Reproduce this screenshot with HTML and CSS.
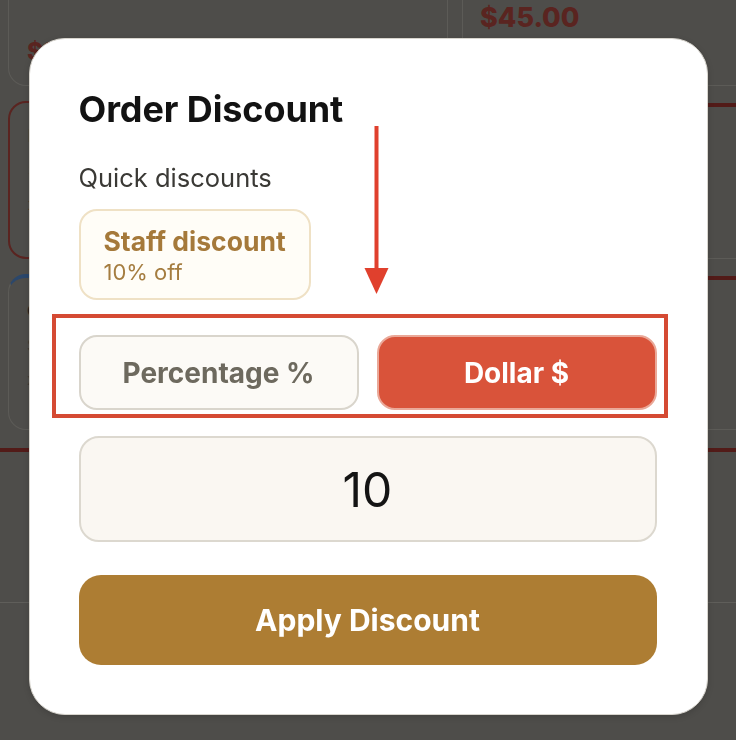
FILE: index.html
```html
<!DOCTYPE html>
<html lang="en">
<head>
<meta charset="utf-8">
<title>Order Discount</title>
<link rel="stylesheet" href="styles.css">
</head>
<body>
<div class="app">
  <div class="grid">
    <div class="card card-top-left">
      <div class="price">$12</div>
    </div>
    <div class="card card-top-right">
      <div class="price">$45.00</div>
    </div>
    <div class="card card-selected">
      <div class="item-name">Pizza</div>
      <div class="item-meta">Size</div>
      <div class="item-price">x1</div>
    </div>
    <div class="card card-red"></div>
    <div class="card card-blue">
      <div class="item-name">Cola</div>
      <div class="item-meta">Side</div>
      <div class="item-meta">x2</div>
    </div>
    <div class="card card-red"></div>
  </div>
  <div class="bar"></div>
  <div class="footer"></div>
</div>

<div class="overlay">
  <div class="modal">
    <h1 class="title">Order Discount</h1>
    <div class="label">Quick discounts</div>
    <button class="quick">
      <span class="quick-name">Staff discount</span>
      <span class="quick-sub">10% off</span>
    </button>
    <div class="toggle">
      <button class="toggle-btn">Percentage %</button>
      <button class="toggle-btn active">Dollar $</button>
    </div>
    <div class="amount">10</div>
    <button class="apply">Apply Discount</button>

    <div class="callout-box"></div>
    <svg class="callout-arrow" width="26" height="168" viewBox="0 0 26 168">
      <line x1="12.5" y1="0" x2="12.5" y2="146" stroke="#e0402d" stroke-width="4"/>
      <polygon points="0.5,142 24.5,142 12.5,168" fill="#e0402d"/>
    </svg>
  </div>
</div>
</body>
</html>
```
FILE: styles.css
```css
* { box-sizing: border-box; }
html, body {
  margin: 0;
  padding: 0;
}
body {
  width: 736px;
  height: 740px;
  overflow: hidden;
  background: #4e4d4a;
  font-family: Inter, "Noto Sans", sans-serif;
}

/* dimmed app behind */
.app {
  padding-left: 8px;
}
.grid {
  display: grid;
  grid-template-columns: 440px 1fr;
  grid-template-rows: 86px 158px 156px;
  column-gap: 14px;
  row-gap: 15px;
}
.card {
  border: 1.5px solid #5c5b57;
  border-radius: 18px;
  padding: 16px 16px;
}
.card-top-left {
  border-top: none;
  border-radius: 0 0 18px 18px;
  padding: 34px 0 0 18px;
}
.card-top-right {
  border-top: none;
  border-right: none;
  border-radius: 0 0 0 18px;
  padding: 0 0 0 17px;
}
.price {
  font-weight: 800;
  font-size: 27px;
  line-height: 36px;
  color: #5a2420;
}
.card-top-left .price { font-size: 24px; }
.card-selected {
  border: 2px solid #5a2420;
}
.card-red {
  border-top: 4px solid #521b18;
  border-right: none;
  border-radius: 0;
  margin-top: 2px;
}
.card-blue {
  border-top: 4px solid #2b476b;
}
.item-name {
  font-weight: 700;
  font-size: 18px;
  line-height: 34px;
  color: #1e1d1c;
  padding-left: 2px;
}
.item-meta {
  font-size: 16px;
  line-height: 34px;
  color: #3a3936;
  padding-left: 2px;
}
.item-price {
  font-weight: 700;
  font-size: 16px;
  line-height: 34px;
  color: #5a2420;
  padding-left: 2px;
}
.bar {
  margin-top: 18px;
  height: 154px;
  border-top: 4px solid #521b18;
  margin-left: -8px;
}
.footer {
  margin-left: -8px;
  height: 140px;
  border-top: 1px solid #5f5e5a;
}

/* modal */
.overlay {
  position: fixed;
  inset: 0;
  display: flex;
  justify-content: center;
  align-items: flex-start;
  padding-top: 38px;
}
.modal {
  position: relative;
  width: 679px;
  height: 677px;
  background: #ffffff;
  border: 1px solid #d8d5ce;
  border-radius: 36px;
  padding: 48px 50px 49px 49px;
  display: flex;
  flex-direction: column;
  box-shadow: 0 2px 6px rgba(0,0,0,0.15);
}
.title {
  margin: 0;
  font-size: 36px;
  line-height: 44px;
  font-weight: 700;
  color: #121212;
  letter-spacing: -0.1px;
}
.label {
  margin-top: 31px;
  font-size: 25.5px;
  line-height: 32px;
  color: #3a3935;
}
button {
  font-family: inherit;
  cursor: pointer;
}
.quick {
  margin-top: 15px;
  align-self: flex-start;
  display: flex;
  flex-direction: column;
  align-items: flex-start;
  padding: 15px 23px 13px;
  background: #fffdf7;
  border: 2px solid #efe1c5;
  border-radius: 18px;
  text-align: left;
}
.quick-name {
  font-weight: 700;
  font-size: 26.5px;
  line-height: 31px;
  color: #a5793a;
}
.quick-sub {
  margin-top: 2px;
  font-size: 22px;
  line-height: 26px;
  color: #a57d40;
}
.toggle {
  margin-top: 35px;
  display: grid;
  grid-template-columns: 1fr 1fr;
  column-gap: 18px;
}
.toggle-btn {
  height: 75px;
  border-radius: 18px;
  border: 2px solid #d9d5cc;
  background: #fcfaf6;
  color: #6d695e;
  font-weight: 700;
  font-size: 28px;
}
.toggle-btn.active {
  background: #d9533a;
  border-color: #eaa898;
  color: #ffffff;
}
.amount {
  margin-top: 26px;
  height: 106px;
  border-radius: 20px;
  border: 2px solid #dcd8cf;
  background: #faf7f2;
  display: flex;
  align-items: center;
  justify-content: center;
  font-size: 48px;
  color: #141414;
}
.apply {
  margin-top: 33px;
  height: 90px;
  border: none;
  border-radius: 22px;
  background: #ad7d33;
  color: #ffffff;
  font-weight: 700;
  font-size: 30px;
}

/* annotation overlay */
.callout-box {
  position: absolute;
  left: 22px;
  top: 275px;
  width: 616px;
  height: 104px;
  border: 4px solid #d54a33;
  pointer-events: none;
}
.callout-arrow {
  position: absolute;
  left: 334px;
  top: 87px;
  pointer-events: none;
}
```
